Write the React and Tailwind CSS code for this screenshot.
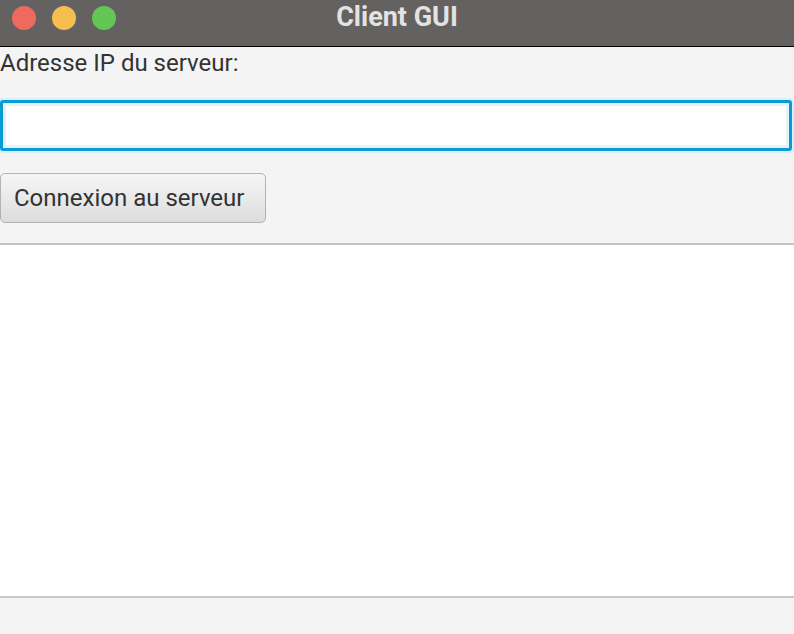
export default function App() {
  return (
    <div className="flex h-[634px] w-[794px] flex-col overflow-hidden bg-[#f4f4f4] font-['Roboto',sans-serif]">
      <div className="relative flex h-[47px] shrink-0 items-start border-b border-black bg-[#646261]">
        <div className="flex gap-[16px] pl-[12px] pt-[6px]">
          <span className="h-[24px] w-[24px] rounded-full bg-[#ee6a5f]" />
          <span className="h-[24px] w-[24px] rounded-full bg-[#f5be4f]" />
          <span className="h-[24px] w-[24px] rounded-full bg-[#62c554]" />
        </div>
        <div className="absolute inset-x-0 top-0 flex h-[35px] items-center justify-center text-[27px] font-bold text-[#e3e3e3]">
          Client GUI
        </div>
      </div>
      <div className="flex flex-col">
        <label className="mt-[2px] text-[24px] leading-[28px] text-[#333]">Adresse IP du serveur:</label>
        <div className="-ml-[2px] mt-[21px] rounded-[4px] bg-[#d9eef7] p-[2px]">
          <input className="block h-[51px] w-full rounded-[3px] border-[3px] border-[#0a9bd6] bg-white px-2 text-[24px] shadow-[inset_0_0_0_3px_#e3f3fa] outline-none" />
        </div>
        <div className="mt-[20px]">
          <button className="h-[50px] w-[266px] rounded-[5px] border border-[#b3b3b3] bg-gradient-to-b from-[#f6f6f6] to-[#dddddd] pl-[13px] text-left text-[24px] text-[#333]">
            Connexion au serveur
          </button>
        </div>
      </div>
      <div className="mt-[20px] h-[2px] shrink-0 bg-[#c4c4c4]" />
      <div className="flex-1 bg-white" />
      <div className="h-[2px] shrink-0 bg-[#c8c8c8]" />
      <div className="h-[36px] shrink-0 bg-[#f4f4f4]" />
    </div>
  );
}
